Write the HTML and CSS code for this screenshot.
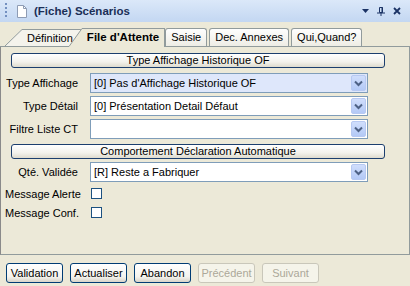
FILE: index.html
```html
<!DOCTYPE html>
<html lang="fr">
<head>
    <meta charset="UTF-8">
    <title>(Fiche) Scénarios</title>
    <link rel="stylesheet" href="styles.css">
</head>
<body>
    <div class="window">
        <!-- Barre de titre -->
        <div class="titlebar">
            <span class="grip"></span>
            <svg class="doc-icon" width="10" height="13" viewBox="0 0 10 13">
                <path d="M0.5 0.5h6l3 3v9h-9z" fill="#fff" stroke="#8e9cb4"/>
                <path d="M6.5 0.5v3h3" fill="none" stroke="#8e9cb4"/>
            </svg>
            <span class="title">(Fiche) Scénarios</span>
            <span class="tools">
                <svg width="7" height="4" viewBox="0 0 7 4"><path d="M0 0h7l-3.5 4z" fill="#1b3365"/></svg>
                <svg width="8" height="9" viewBox="0 0 8 9">
                    <path d="M2.5 0.5h3v5h-3z" fill="none" stroke="#1b3365"/>
                    <path d="M5 0v6" stroke="#1b3365"/>
                    <path d="M0 6h8" stroke="#1b3365"/>
                    <path d="M4 6v3" stroke="#1b3365"/>
                </svg>
                <svg width="8" height="8" viewBox="0 0 8 8"><path d="M1 1l6 6M7 1l-6 6" stroke="#1b3365" stroke-width="1.8"/></svg>
            </span>
        </div>

        <!-- Onglets -->
        <div class="tabs">
            <div class="tab doc">
                <svg class="slant" width="17" height="17" viewBox="0 0 17 17">
                    <path d="M0 17L17 0V17z" fill="#f4f3ec"/>
                    <path d="M0 17L17 0.5" stroke="#919b9c" fill="none"/>
                </svg>
                Définition
            </div>
            <div class="tab doc active">
                <svg class="slant" width="13" height="19" viewBox="0 0 13 19">
                    <path d="M0 18L13 0V19H0z" fill="#ece9d8"/>
                    <path d="M0 18.5L13 0.5" stroke="#919b9c" fill="none"/>
                </svg>
                File d'Attente
            </div>
            <div class="tab">Saisie</div>
            <div class="tab">Dec. Annexes</div>
            <div class="tab">Qui,Quand?</div>
        </div>

        <!-- Contenu de l'onglet -->
        <div class="panel">
            <div class="group-head">Type Affichage Historique OF</div>
            <div class="field first">
                <label>Type Affichage</label>
                <div class="combo focus">
                    <span class="value">[0] Pas d'Affichage Historique OF</span>
                    <span class="arrow"><svg width="15" height="16" viewBox="0 0 15 16"><path d="M4 6.5l3.5 3.5 3.5-3.5" fill="none" stroke="#4d6185" stroke-width="2"/></svg></span>
                </div>
            </div>
            <div class="field">
                <label>Type Détail</label>
                <div class="combo">
                    <span class="value">[0] Présentation Detail Défaut</span>
                    <span class="arrow"><svg width="15" height="16" viewBox="0 0 15 16"><path d="M4 6.5l3.5 3.5 3.5-3.5" fill="none" stroke="#4d6185" stroke-width="2"/></svg></span>
                </div>
            </div>
            <div class="field">
                <label>Filtre Liste CT</label>
                <div class="combo">
                    <span class="value"></span>
                    <span class="arrow"><svg width="15" height="16" viewBox="0 0 15 16"><path d="M4 6.5l3.5 3.5 3.5-3.5" fill="none" stroke="#4d6185" stroke-width="2"/></svg></span>
                </div>
            </div>

            <div class="group-head second">Comportement Déclaration Automatique</div>
            <div class="field">
                <label>Qté. Validée</label>
                <div class="combo">
                    <span class="value">[R] Reste a Fabriquer</span>
                    <span class="arrow"><svg width="15" height="16" viewBox="0 0 15 16"><path d="M4 6.5l3.5 3.5 3.5-3.5" fill="none" stroke="#4d6185" stroke-width="2"/></svg></span>
                </div>
            </div>
            <div class="field check first-check">
                <label>Message Alerte</label>
                <span class="checkbox"></span>
            </div>
            <div class="field check">
                <label>Message Conf.</label>
                <span class="checkbox"></span>
            </div>
        </div>

        <!-- Boutons -->
        <div class="actions">
            <button class="btn">Validation</button>
            <button class="btn">Actualiser</button>
            <button class="btn">Abandon</button>
            <button class="btn" disabled>Précédent</button>
            <button class="btn" disabled>Suivant</button>
        </div>
    </div>
</body>
</html>
```

FILE: styles.css
```css
body {
    margin: 0;
    font-family: "Liberation Sans", Arial, sans-serif;
    font-size: 11px;
    color: #000;
    background-color: #ece9d8;
}
.window {
    width: 410px;
    height: 286px;
    display: flex;
    flex-direction: column;
}
.titlebar {
    height: 22px;
    flex: none;
    display: flex;
    align-items: center;
    padding: 0 9px 0 5px;
    background: linear-gradient(#dbe8f9, #c3d7f2);
}
.titlebar .grip {
    width: 2px;
    height: 16px;
    background: repeating-linear-gradient(#7390c0 0 2px, transparent 2px 4px);
}
.titlebar .doc-icon {
    margin-left: 10px;
}
.titlebar .title {
    margin-left: 7px;
    font-weight: bold;
    font-size: 11.5px;
    color: #1b2f57;
}
.titlebar .tools {
    margin-left: auto;
    display: flex;
    align-items: center;
    gap: 8px;
}
.tabs {
    height: 25px;
    flex: none;
    box-sizing: border-box;
    display: flex;
    align-items: flex-end;
    padding-left: 5px;
    border-bottom: 1px solid #919b9c;
}
.tab {
    position: relative;
    height: 18px;
    box-sizing: border-box;
    padding: 0 5px;
    margin-left: 2px;
    line-height: 16px;
    white-space: nowrap;
    border: 1px solid #919b9c;
    border-bottom: none;
    border-radius: 3px 3px 0 0;
    background: linear-gradient(#fefefe, #eeede5);
}
.tab.doc {
    height: 17px;
    margin-left: 17px;
    padding-right: 9px;
    border: none;
    border-top: 1px solid #919b9c;
    border-radius: 0;
    background: #f4f3ec;
}
.tab.doc .slant {
    position: absolute;
    left: -17px;
    top: -1px;
}
.tab.active {
    z-index: 1;
    height: 19px;
    margin-left: 0;
    margin-bottom: -1px;
    padding-right: 5px;
    font-weight: bold;
    font-size: 11.5px;
    line-height: 17px;
    border-right: 1px solid #919b9c;
    background: #ece9d8;
}
.tab.active .slant {
    left: -13px;
}
.tab.active + .tab {
    margin-left: 0;
}
.panel {
    flex: 1;
    border: 1px solid #919b9c;
    border-top: none;
    border-left-color: #8a8a8a;
    padding-top: 6px;
}
.group-head {
    height: 15px;
    box-sizing: border-box;
    margin: 0 24px 0 10px;
    border: 1px solid #1c3f6e;
    border-radius: 3px;
    background: linear-gradient(#ffffff, #f3f2ec 60%, #dedbce);
    text-align: center;
    line-height: 13px;
}
.group-head.second {
    margin-top: 5px;
}
.field {
    display: grid;
    grid-template-columns: 73px 278px;
    column-gap: 12px;
    align-items: center;
    padding-left: 4px;
    margin-top: 3px;
}
.field.first {
    margin-top: 5px;
}
.field label {
    text-align: right;
    white-space: nowrap;
}
.combo {
    height: 20px;
    box-sizing: border-box;
    display: flex;
    align-items: center;
    padding: 1px;
    border: 1px solid #7f9db9;
    background: #fff;
}
.combo.focus {
    background: #dee7fb;
}
.combo .value {
    padding-left: 2px;
    white-space: nowrap;
}
.combo .arrow {
    margin-left: auto;
    width: 15px;
    height: 16px;
    box-sizing: border-box;
    border: 1px solid #b7c9f2;
    border-radius: 2px;
    background: linear-gradient(#d0defc, #b3c9f6);
}
.combo .arrow svg {
    display: block;
    margin: -1px 0 0 -1px;
}
.field.check {
    height: 19px;
    margin-top: 0;
}
.field.first-check {
    margin-top: 2px;
}
.checkbox {
    width: 11px;
    height: 11px;
    box-sizing: border-box;
    margin-left: 1px;
    border: 1px solid #1c5180;
    background: #fff;
}
.actions {
    height: 31px;
    flex: none;
    box-sizing: border-box;
    display: flex;
    gap: 7px;
    padding: 8px 0 0 6px;
}
.btn {
    width: 57px;
    height: 20px;
    box-sizing: border-box;
    padding: 0;
    font: inherit;
    color: #000;
    border: 1px solid #003c74;
    border-radius: 3px;
    background: linear-gradient(#ffffff, #f4f3ee 70%, #d8d4c8);
}
.btn:disabled {
    color: #aca899;
    border-color: #c9c7ba;
    background: #f5f4ea;
}
```
